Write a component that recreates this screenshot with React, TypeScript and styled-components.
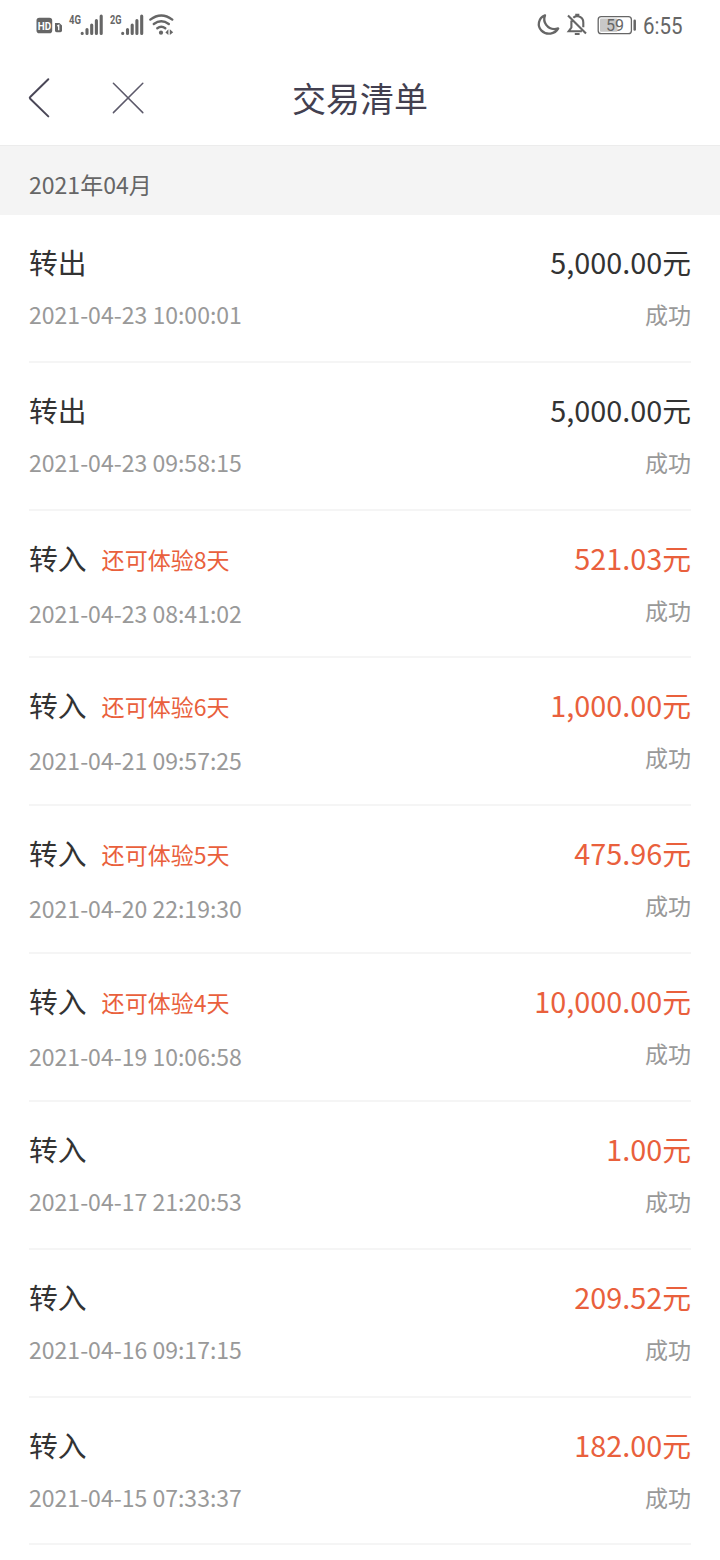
import React from 'react';
import styled, { createGlobalStyle } from 'styled-components';

const GlobalStyle = createGlobalStyle`
  * { box-sizing: border-box; }
  body {
    margin: 0;
    background: #fff;
    font-family: "Noto Sans CJK SC", sans-serif;
  }
`;

const Screen = styled.main`
  width: 720px;
  height: 1560px;
  overflow: hidden;
  background: #fff;
`;

const StatusBar = styled.div`
  display: flex;
  justify-content: space-between;
  height: 50px;
`;

const NavBar = styled.header`
  display: grid;
  grid-template-columns: 180px 1fr 180px;
  height: 96px;
  border-bottom: 1px solid #ececec;
`;

const NavIcons = styled.div`
  display: flex;
`;

const Title = styled.h1`
  margin: 0;
  text-align: center;
  font-size: 34px;
  font-weight: 400;
  line-height: 96px;
  color: #434050;
`;

const MonthHeader = styled.h2`
  margin: 0;
  height: 69px;
  padding: 3px 29px 0;
  background: #f4f4f4;
  color: #666;
  font-size: 23.04px;
  font-weight: 400;
  line-height: 70px;
`;

const List = styled.ul`
  margin: 0;
  padding: 0 29px;
  list-style: none;
`;

const Row = styled.li`
  display: flex;
  justify-content: space-between;
  height: 147.84px;
  padding-top: 27px;
  border-bottom: 2px solid #f5f5f5;
  white-space: nowrap;
`;

const Column = styled.div<{ $end?: boolean }>`
  display: flex;
  flex-direction: column;
  align-items: ${(p) => (p.$end ? 'flex-end' : 'flex-start')};
`;

const Heading = styled.div`
  display: flex;
  gap: 15px;
  height: 40px;
  font-size: 28.8px;
  line-height: 40px;
  color: #333;
`;

const Tag = styled.span`
  padding-top: 1px;
  font-size: 23.04px;
  color: #e9603c;
`;

const Amount = styled.div<{ $income: boolean }>`
  font-size: 28.8px;
  line-height: 40px;
  color: ${(p) => (p.$income ? '#e9603c' : '#333')};
`;

const Detail = styled.div<{ $lowered?: boolean }>`
  padding-top: ${(p) => (p.$lowered ? 18 : 15)}px;
  font-size: 23.04px;
  line-height: 34px;
  color: #999;
`;

type Entry = { kind: string; time: string; amount: string; days?: number };

const entries: Entry[] = [
  { kind: '转出', time: '2021-04-23 10:00:01', amount: '5,000.00' },
  { kind: '转出', time: '2021-04-23 09:58:15', amount: '5,000.00' },
  { kind: '转入', time: '2021-04-23 08:41:02', amount: '521.03', days: 8 },
  { kind: '转入', time: '2021-04-21 09:57:25', amount: '1,000.00', days: 6 },
  { kind: '转入', time: '2021-04-20 22:19:30', amount: '475.96', days: 5 },
  { kind: '转入', time: '2021-04-19 10:06:58', amount: '10,000.00', days: 4 },
  { kind: '转入', time: '2021-04-17 21:20:53', amount: '1.00' },
  { kind: '转入', time: '2021-04-16 09:17:15', amount: '209.52' },
  { kind: '转入', time: '2021-04-15 07:33:37', amount: '182.00' },
];

const GREY = '#666';

const SignalBars = ({ x }: { x: number }) => (
  <g stroke={GREY} strokeWidth="3.1" strokeLinecap="round">
    <path d={`M${x} 33.2v.2M${x + 4.8} 29.5v3.9M${x + 9.5} 25v8.4M${x + 14.2} 20.5v12.9M${x + 19} 16v17.4`} />
  </g>
);

const NetworkIcons = () => (
  <svg width="190" height="50" viewBox="0 0 190 50" fill={GREY} fontFamily="Roboto, sans-serif">
    <rect x="36.5" y="17.8" width="15.7" height="15.4" rx="2.8" />
    <text x="37.7" y="29.6" fontSize="10.8" fontWeight="700" fill="#fff" textLength="13.4" lengthAdjust="spacingAndGlyphs">HD</text>
    <path d="M55 23h4.4l2.6 2.6v5q0 1.6-1.6 1.6H56.6q-1.6 0-1.6-1.6z" />
    <path d="M57.2 26l1.5-.7v5" fill="none" stroke="#fff" strokeWidth="1.3" />
    <text x="69" y="23.6" fontSize="13" fontWeight="700" textLength="12" lengthAdjust="spacingAndGlyphs">4G</text>
    <SignalBars x={82.2} />
    <text x="110" y="23.6" fontSize="13" fontWeight="700" textLength="11.5" lengthAdjust="spacingAndGlyphs">2G</text>
    <SignalBars x={122.7} />
    <g fill="none" stroke={GREY} strokeWidth="2.4" strokeLinecap="round">
      <path d="M150.3 19.6q11-8.4 22 0M153.8 24q7.5-5.5 15 0M157.3 28.3q4-3 8 0" />
    </g>
    <circle cx="161" cy="32.7" r="2.1" />
    <path d="M168.4 29.3v5.8l-3-2.6zM169.8 29.3v5.8l3.4-2.9z" />
  </svg>
);

const DeviceIcons = () => (
  <svg width="190" height="50" viewBox="530 0 190 50" fill="none" stroke={GREY} fontFamily="Roboto, sans-serif">
    <path d="M545 15.4C538.2 18 537 26 541.5 30.6C546.5 35.6 555 34.3 558.2 28.4C553.5 29.8 548.8 28.4 546.2 24.9C544 22 543.8 18.6 545 15.4Z" strokeWidth="2.3" strokeLinejoin="round" />
    <path d="M571.4 20.5v7l-2.7 3.8h13.2M573.3 17.8q1.3-1.2 3-1.5v-1.6h2v1.6q5 1.2 5 6.2v4.8M568 15.4l18 18.2" strokeWidth="2.1" />
    <path d="M574.8 34h4.8" strokeWidth="2" />
    <rect x="598.2" y="16.7" width="33.2" height="17" rx="3" strokeWidth="1.3" />
    <rect x="600" y="18.6" width="17.5" height="13.2" rx="1" fill="#c8c8c8" stroke="none" />
    <path d="M634.7 20.8v8.7" strokeWidth="2.5" strokeLinecap="round" />
    <g fill={GREY} stroke="none">
      <text x="606" y="31" fontSize="16.8" textLength="18" lengthAdjust="spacingAndGlyphs">59</text>
      <text x="643" y="34" fontSize="23.5" textLength="39.5" lengthAdjust="spacingAndGlyphs">6:55</text>
    </g>
  </svg>
);

const BackIcon = () => (
  <svg width="90" height="95" viewBox="0 50 90 95" fill="none" stroke="#4a4757" strokeWidth="2" strokeLinecap="round" strokeLinejoin="round">
    <path d="M48.3 79.2L30.2 97q-.9.9 0 1.8L48.3 116.4" />
  </svg>
);

const CloseIcon = () => (
  <svg width="90" height="95" viewBox="90 50 90 95" fill="none" stroke="#5c596a" strokeWidth="1.5" strokeLinecap="round">
    <path d="M113.4 83.2l29.4 29.4M142.8 83.2l-29.4 29.4" />
  </svg>
);

export default function App() {
  return (
    <Screen>
      <GlobalStyle />
      <StatusBar>
        <NetworkIcons />
        <DeviceIcons />
      </StatusBar>
      <NavBar>
        <NavIcons>
          <BackIcon />
          <CloseIcon />
        </NavIcons>
        <Title>交易清单</Title>
      </NavBar>
      <MonthHeader>2021年04月</MonthHeader>
      <List>
        {entries.map((e) => (
          <Row key={e.time}>
            <Column>
              <Heading>
                <span>{e.kind}</span>
                {e.days !== undefined && <Tag>还可体验{e.days}天</Tag>}
              </Heading>
              <Detail $lowered={e.days !== undefined}>{e.time}</Detail>
            </Column>
            <Column $end>
              <Amount $income={e.kind === '转入'}>{e.amount}元</Amount>
              <Detail>成功</Detail>
            </Column>
          </Row>
        ))}
      </List>
    </Screen>
  );
}
